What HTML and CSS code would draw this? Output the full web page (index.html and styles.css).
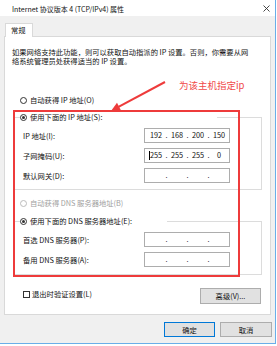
FILE: index.html
```html
<!DOCTYPE html>
<html lang="zh-CN">
<head>
<meta charset="utf-8">
<link rel="stylesheet" href="styles.css">
</head>
<body>
<div class="window">
  <div class="titlebar">
    <span class="title">Internet 协议版本 4 (TCP/IPv4) 属性</span>
    <svg class="close" width="7" height="7" viewBox="0 0 7 7"><path d="M0.5 0.5L6.5 6.5M6.5 0.5L0.5 6.5" stroke="#333" stroke-width="0.9"/></svg>
  </div>
  <div class="tabs"><div class="tab">常规</div></div>
  <div class="panel">
    <p class="intro">如果网络支持此功能，则可以获取自动指派的 IP 设置。否则，你需要从网<br>络系统管理员处获得适当的 IP 设置。</p>
    <div class="radio-row auto-ip"><span class="radio"></span><span>自动获得 IP 地址(O)</span></div>
    <div class="group group-ip">
      <div class="legend legend-ip"><span class="radio checked"></span><span>使用下面的 IP 地址(S):</span></div>
      <div class="field first"><span>IP 地址(I):</span>
        <div class="ipbox"><span class="seg">192</span><span class="dot">.</span><span class="seg">168</span><span class="dot">.</span><span class="seg">200</span><span class="dot">.</span><span class="seg">150</span></div>
      </div>
      <div class="field"><span>子网掩码(U):</span>
        <div class="ipbox"><span class="seg caret-seg"><span class="caret"></span>255</span><span class="dot">.</span><span class="seg">255</span><span class="dot">.</span><span class="seg">255</span><span class="dot">.</span><span class="seg">0</span></div>
      </div>
      <div class="field"><span>默认网关(D):</span>
        <div class="ipbox"><span class="seg"></span><span class="dot">.</span><span class="seg"></span><span class="dot">.</span><span class="seg"></span><span class="dot">.</span><span class="seg"></span></div>
      </div>
    </div>
    <div class="radio-row auto-dns disabled"><span class="radio"></span><span>自动获得 DNS 服务器地址(B)</span></div>
    <div class="group group-dns">
      <div class="legend legend-dns"><span class="radio checked"></span><span>使用下面的 DNS 服务器地址(E):</span></div>
      <div class="field first"><span>首选 DNS 服务器(P):</span>
        <div class="ipbox"><span class="seg"></span><span class="dot">.</span><span class="seg"></span><span class="dot">.</span><span class="seg"></span><span class="dot">.</span><span class="seg"></span></div>
      </div>
      <div class="field"><span>备用 DNS 服务器(A):</span>
        <div class="ipbox"><span class="seg"></span><span class="dot">.</span><span class="seg"></span><span class="dot">.</span><span class="seg"></span><span class="dot">.</span><span class="seg"></span></div>
      </div>
    </div>
    <div class="bottom-row">
      <div class="check-row"><span class="checkbox"></span><span>退出时验证设置(L)</span></div>
      <button class="btn btn-adv">高级(V)...</button>
    </div>
  </div>
  <div class="footer">
    <button class="btn btn-ok">确定</button>
    <button class="btn btn-cancel">取消</button>
  </div>
  <div class="annot-rect"></div>
  <svg class="annot-arrow" width="277" height="346" viewBox="0 0 277 346">
    <line x1="165" y1="82" x2="118.5" y2="106.8" stroke="#ee3b3b" stroke-width="2"/>
    <polygon points="111,111 121,110.4 117,102.8" fill="#ee3b3b"/>
  </svg>
  <div class="annot-text">为该主机指定ip</div>
</div>
</body>
</html>
```
FILE: styles.css
```css
html, body {
  margin: 0;
  background: #fff;
}
body {
  font-family: "Noto Sans CJK SC", "Noto Sans", sans-serif;
  font-size: 7.3px;
  color: #111;
}
.window {
  position: relative;
  width: 275px;
  height: 343px;
  background: #f0f0f0;
  border-right: 1px solid #6aaee8;
  border-bottom: 1px solid #6aaee8;
  display: flex;
  flex-direction: column;
}
.titlebar {
  height: 16px;
  flex-shrink: 0;
  background: #fff;
  display: flex;
  align-items: center;
  justify-content: space-between;
  padding: 0 5px 0 12px;
  box-sizing: border-box;
}
.title {
  font-size: 7px;
  line-height: 9px;
  margin-top: 2px;
}
.close {
  display: block;
  margin-top: 1px;
}
.tabs {
  height: 21px;
  flex-shrink: 0;
  display: flex;
  align-items: flex-end;
  padding-left: 5px;
  margin-bottom: -1px;
  position: relative;
  z-index: 1;
}
.tab {
  width: 28px;
  height: 14px;
  box-sizing: border-box;
  background: #fff;
  border: 1px solid #d9d9d9;
  border-bottom: none;
  padding-left: 5px;
  line-height: 12px;
}
.panel {
  margin: 0 4px;
  height: 279px;
  flex-shrink: 0;
  box-sizing: border-box;
  border: 1px solid #d9d9d9;
  background: #fff;
}
.intro {
  margin: 11px 0 0 7px;
  line-height: 9px;
}
.radio-row {
  display: flex;
  align-items: center;
  gap: 3px;
  height: 12px;
  margin-left: 15px;
}
.auto-ip {
  margin-top: 28px;
}
.auto-dns {
  margin-top: 7px;
}
.disabled {
  color: #a0a0a0;
}
.radio {
  width: 7px;
  height: 7px;
  box-sizing: border-box;
  border: 1px solid #333;
  border-radius: 50%;
  background: #fff;
  display: flex;
  align-items: center;
  justify-content: center;
  flex-shrink: 0;
}
.disabled .radio {
  border-color: #bcbcbc;
}
.radio.checked::after {
  content: "";
  width: 3px;
  height: 3px;
  border-radius: 50%;
  background: #333;
}
.group {
  margin-left: 9px;
  width: 248px;
  box-sizing: border-box;
  border: 1px solid #dcdcdc;
}
.group-ip {
  margin-top: 11px;
  padding-bottom: 6px;
}
.group-dns {
  margin-top: 12px;
  padding-bottom: 7px;
}
.legend {
  display: flex;
  align-items: center;
  gap: 3px;
  height: 12px;
  margin-top: -7px;
  margin-left: 5px;
  background: #fff;
}
.legend-ip {
  width: 197px;
}
.legend-dns {
  width: 147px;
}
.field {
  display: grid;
  grid-template-columns: 1fr 86px;
  align-items: center;
  height: 15px;
  padding: 0 31px 0 8px;
  margin-top: 5px;
}
.ipbox {
  display: flex;
  height: 15px;
  box-sizing: border-box;
  border: 1px solid #adadad;
  padding-left: 2px;
  align-items: center;
  line-height: 13px;
}
.seg {
  width: 18px;
  text-align: center;
  position: relative;
}
.dot {
  width: 3px;
  text-align: center;
}
.caret {
  position: absolute;
  left: 2px;
  top: 2px;
  width: 1px;
  height: 9px;
  background: #000;
}
.bottom-row {
  display: flex;
  justify-content: space-between;
  align-items: flex-start;
  margin-top: 13px;
  padding: 0 9px 0 18px;
}
.check-row {
  display: flex;
  align-items: center;
  gap: 2px;
  height: 12px;
}
.checkbox {
  width: 7px;
  height: 7px;
  box-sizing: border-box;
  border: 1px solid #333;
  background: #fff;
}
.btn {
  font-family: inherit;
  font-size: 7.3px;
  color: #111;
  background: #e1e1e1;
  border: 1px solid #adadad;
  padding: 0;
  margin: 0;
  box-sizing: border-box;
  line-height: 12px;
}
.btn-adv {
  width: 61px;
  height: 16px;
}
.footer {
  display: flex;
  justify-content: flex-end;
  gap: 5px;
  padding: 7px 3px 0 0;
}
.btn-ok {
  width: 51px;
  height: 15px;
  border-color: #0078d7;
}
.btn-cancel {
  width: 52px;
  height: 15px;
}
.annot-rect {
  position: absolute;
  left: 13px;
  top: 110px;
  width: 227px;
  height: 167px;
  box-sizing: border-box;
  border: 2px solid #ee3b3b;
  pointer-events: none;
}
.annot-arrow {
  position: absolute;
  left: 0;
  top: 0;
  pointer-events: none;
}
.annot-text {
  position: absolute;
  left: 179px;
  top: 78px;
  font-size: 9.5px;
  line-height: 14px;
  color: #f04a4a;
}
```
